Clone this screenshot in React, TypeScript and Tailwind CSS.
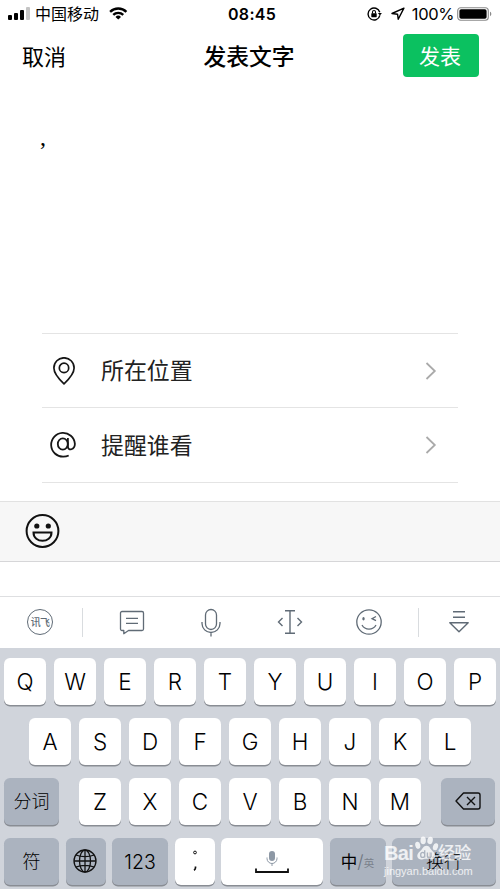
import type { ReactNode } from "react";

const rowOne = ["Q", "W", "E", "R", "T", "Y", "U", "I", "O", "P"];
const rowTwo = ["A", "S", "D", "F", "G", "H", "J", "K", "L"];
const rowThree = ["Z", "X", "C", "V", "B", "N", "M"];

function Key({ children, className = "w-[42px]", dark = false }: { children: ReactNode; className?: string; dark?: boolean }) {
  return (
    <button
      className={`flex h-[47px] shrink-0 items-center justify-center rounded-[6px] text-black shadow-[0_1.5px_0_#898d94] ${
        dark ? "bg-[#abb3bf]" : "bg-white"
      } ${className}`}
    >
      {children}
    </button>
  );
}

function Letter({ children }: { children: string }) {
  return (
    <Key>
      <span className="pt-[3px] text-[22.5px] leading-none font-light">{children}</span>
    </Key>
  );
}

function StatusBar() {
  return (
    <div className="relative flex h-7 items-center justify-between pr-[7px] pl-2">
      <div className="flex items-center">
        <svg className="mr-[5px] h-[13px] w-[22px]" viewBox="0 0 22 13">
          <rect x="0" y="8" width="4" height="5" rx="1" />
          <rect x="6" y="6" width="4" height="7" rx="1" />
          <rect x="12" y="3" width="4" height="10" rx="1" />
          <rect x="18" y="0" width="4" height="13" rx="1" fill="#c4c4c4" />
        </svg>
        <span className="text-[16px] leading-none">中国移动</span>
        <svg className="ml-[10px] h-[13px] w-[18.5px]" viewBox="0 0 20 14" fill="none" stroke="#000" strokeWidth="2.6">
          <path d="M1.2 5.2a12.6 12.6 0 0 1 17.6 0" />
          <path d="M4.6 8.5a7.8 7.8 0 0 1 10.8 0" />
          <path d="M10 13.6 7 10.7a4.3 4.3 0 0 1 6 0z" fill="#000" stroke="none" />
        </svg>
      </div>
      <span className="absolute top-[6px] left-[228px] text-[16px] leading-none font-semibold tracking-[0.3px]">08:45</span>
      <div className="flex items-center">
        <svg className="mr-[9px] h-[14px] w-[15px]" viewBox="0 0 15 14" fill="none" stroke="#000" strokeWidth="1.4">
          <path d="M12.8 5.2a6 6 0 1 0 .1 3.2" />
          <path d="M10.9 6h4l-2 2.6z" fill="#000" stroke="none" />
          <rect x="4.3" y="6.2" width="5.4" height="4" rx=".6" fill="#000" stroke="none" />
          <path d="M5.5 6.5V5a1.5 1.5 0 0 1 3 0v1.5" strokeWidth="1.1" />
        </svg>
        <svg className="mr-[7px] h-[13px] w-[14px]" viewBox="0 0 13 12" fill="none" stroke="#000" strokeWidth="1.3" strokeLinejoin="round">
          <path d="M12 1 .9 6l5.2.7.6 4.6z" />
        </svg>
        <span className="text-[16.5px] leading-none tracking-[-0.4px]">100%</span>
        <svg className="ml-[3px] h-[14px] w-[36px]" viewBox="0 0 36 14">
          <rect x=".7" y=".7" width="30.6" height="12.6" rx="3" fill="none" stroke="#8a8a8a" strokeWidth="1.1" />
          <rect x="2.4" y="2.2" width="27.2" height="9.6" rx="1.8" />
          <path d="M33 4.8v4.4c1.8-.6 1.8-3.8 0-4.4z" fill="#8a8a8a" />
        </svg>
      </div>
    </div>
  );
}

function Chevron() {
  return (
    <svg className="mt-px mr-[21px] ml-auto h-[18px] w-[12px]" viewBox="0 0 12 18" fill="none" stroke="#aaa" strokeWidth="1.8">
      <path d="M1.5 1 9.8 9l-8.3 8" />
    </svg>
  );
}

function Options() {
  return (
    <div className="mr-[42px] ml-[42px] border-b border-[#e4e4e4] text-[22.9px]">
      <div className="flex h-[74px] items-center border-t border-[#e4e4e4]">
        <svg className="mt-px mr-[25px] ml-[9px] h-7 w-[25px]" viewBox="0 0 25 28" fill="none" stroke="#161616" strokeWidth="1.7">
          <path d="M13 26.8C9 23 2.9 17 2.9 10.9a10.1 10.1 0 0 1 20.2 0C23.1 17 17 23 13 26.8z" strokeLinejoin="round" />
          <circle cx="13" cy="10.9" r="4.7" />
        </svg>
        <span className="pt-[2px] leading-none text-[#222]">所在位置</span>
        <Chevron />
      </div>
      <div className="flex h-[75px] items-center border-t border-[#e4e4e4]">
        <svg className="mr-[25px] ml-[8px] h-[27px] w-[26px]" viewBox="0 0 26 27" fill="none" stroke="#161616" strokeWidth="1.8">
          <ellipse cx="12.8" cy="13" rx="5" ry="5.7" />
          <path d="M17.9 7v8.500c0 4.900 7 3.300 7-2.700a11.900 11.900 0 1 0-11.600 12.900c2 0 3.800-.4 5.400-1.200" />
        </svg>
        <span className="pt-[3px] leading-none text-[#222]">提醒谁看</span>
        <Chevron />
      </div>
    </div>
  );
}

function EmojiBar() {
  return (
    <div className="mt-[18px] flex h-[61px] items-center border-y border-t-[#e2e2e2] border-b-[#d6d6d8] bg-[#f7f7f7] pl-[25px]">
      <svg className="h-[35px] w-[35px]" viewBox="0 0 35 35" fill="none" stroke="#111" strokeWidth="2">
        <circle cx="17.5" cy="17" r="15.9" />
        <circle cx="11.8" cy="12" r="2.6" fill="#111" stroke="none" />
        <circle cx="23.3" cy="12" r="2.6" fill="#111" stroke="none" />
        <path d="M8.5 18.500h18c0 11-18 11-18 0z" />
      </svg>
    </div>
  );
}

function InputTools() {
  return (
    <div className="mt-[34px] flex h-[52px] items-center border-t border-[#dedfe1] text-[#606b76]">
      <div className="ml-[27px] flex h-[26px] w-[26px] items-center justify-center rounded-full border-[1.3px] border-[#606b76]">
        <span className="text-[10px] leading-none font-medium tracking-[-0.8px] whitespace-nowrap">讯飞</span>
      </div>
      <div className="ml-[29px] h-[29px] w-px bg-[#d9dcdf]" />
      <svg className="ml-[36px] h-[26px] w-[26px]" viewBox="0 0 26 26" fill="none" stroke="currentColor" strokeWidth="1.3" strokeLinejoin="round">
        <path d="M3 2.5h20a1.5 1.5 0 0 1 1.5 1.5v16a1.5 1.5 0 0 1-1.5 1.5H9.5L4.800 24.700v-3.200H3A1.500 1.500 0 0 1 1.500 20V4A1.500 1.500 0 0 1 3 2.500z" />
        <path d="M7 9.300h12M7 14.300h12" />
      </svg>
      <svg className="ml-[56px] h-[29px] w-[20px]" viewBox="0 0 20 29" fill="none" stroke="currentColor" strokeWidth="1.3">
        <rect x="4.5" y="1.5" width="11" height="20" rx="5.5" />
        <path d="M1 14v1.500a9 9 0 0 0 18 0V14M10 24.500V28.500" />
      </svg>
      <svg className="ml-[56px] h-[26px] w-[26px]" viewBox="0 0 26 26" fill="none" stroke="currentColor" strokeWidth="1.4">
        <path d="M8 1.700h10M8 24.300h10M13 1.700v22.600M5.500 9 1.500 13l4 4M20.500 9l4 4-4 4" />
      </svg>
      <svg className="ml-[53px] h-[26px] w-[26px]" viewBox="0 0 26 26" fill="none" stroke="currentColor" strokeWidth="1.3">
        <circle cx="13" cy="13" r="12.2" />
        <ellipse cx="7.5" cy="9.8" rx="1.2" ry="1.8" fill="currentColor" stroke="none" />
        <path d="m20 7.500-4 2.200 4 2M6 16c3 5.500 11 5.500 14 0" />
      </svg>
      <div className="ml-[36px] h-[29px] w-px bg-[#d9dcdf]" />
      <svg className="ml-[30px] h-[24px] w-[20px]" viewBox="0 0 20 24" fill="none" stroke="currentColor" strokeWidth="1.4">
        <path d="M4 1.700h12M4 7.200h12M.8 12.700h18.400L10 21.800z" strokeLinejoin="round" />
      </svg>
    </div>
  );
}

function Watermark() {
  return (
    <div className="absolute top-[188px] left-[384px] h-[50px] w-[92px] font-['Liberation_Sans','Noto_Sans_CJK_SC',sans-serif] text-white/80">
      <div className="flex h-[27px] items-end leading-none">
        <span className="text-[20px] leading-none font-bold tracking-[-0.7px]">Bai</span>
        <svg className="mb-[1px] h-[27px] w-[27px] shrink-0" viewBox="0 0 28 30" fill="currentColor">
          <ellipse cx="4.3" cy="11.5" rx="2.8" ry="4" transform="rotate(-12 4.3 11.5)" />
          <ellipse cx="10.3" cy="6" rx="3" ry="4.2" />
          <ellipse cx="18" cy="6" rx="3" ry="4.2" transform="rotate(12 18 6)" />
          <ellipse cx="24" cy="13" rx="2.8" ry="4" transform="rotate(18 24 13)" />
          <path d="M14 12c3.500 0 4 3.500 6.500 5.700 6 5.300 2.300 10.300-2.500 9.300-3-.7-5-.7-8 0-5.800 1.300-9-4.500-3-9.200C10 15.400 10.500 12 14 12z" />
          <path d="M12 17v8M12 21.500a2.200 2.200 0 1 0-4.400 0v1.200a2.200 2.200 0 0 0 4.400 0zM15 19.500v4a2 2 0 0 0 4 0v-4" fill="none" stroke="#abb3bf" strokeWidth="1.5" />
        </svg>
        <span className="mb-[1px] -ml-[2px] text-[17px] leading-none font-medium tracking-[-0.7px] whitespace-nowrap">经验</span>
      </div>
      <div className="mt-[3px] text-[11px] leading-none whitespace-nowrap">jingyan.baidu.com</div>
    </div>
  );
}

function Keyboard() {
  return (
    <div className="relative flex h-[242px] flex-col gap-[13px] bg-[#d0d4db] pt-[10px]">
      <div className="flex gap-2 pl-1">
        {rowOne.map((letter) => (
          <Letter key={letter}>{letter}</Letter>
        ))}
      </div>
      <div className="flex justify-center gap-2">
        {rowTwo.map((letter) => (
          <Letter key={letter}>{letter}</Letter>
        ))}
      </div>
      <div className="flex justify-between pr-[5px] pl-1">
        <Key dark className="w-[55px]">
          <span className="text-[18px] font-light">分词</span>
        </Key>
        <div className="flex gap-2">
          {rowThree.map((letter) => (
            <Letter key={letter}>{letter}</Letter>
          ))}
        </div>
        <Key dark className="w-[54px]">
          <svg className="h-[18px] w-[26px]" viewBox="0 0 26 18" fill="none" stroke="#111" strokeWidth="1.4" strokeLinejoin="round">
            <path d="M8.500 1H23a2 2 0 0 1 2 2v12a2 2 0 0 1-2 2H8.500L1 9z" />
            <path d="m12 5 8 8M20 5l-8 8" />
          </svg>
        </Key>
      </div>
      <div className="flex justify-between pr-1 pl-1">
        <Key dark className="w-[55px]">
          <span className="pt-px text-[18px] font-light">符</span>
        </Key>
        <Key dark className="w-[40px]">
          <svg className="mr-[2px] h-6 w-6" viewBox="0 0 24 24" fill="none" stroke="#111" strokeWidth="1.3">
            <circle cx="12" cy="12" r="11" />
            <ellipse cx="12" cy="12" rx="5.5" ry="11" />
            <path d="M12 1v22M1 12h22M3 6c5 2.200 13 2.200 18 0M3 18c5-2.200 13-2.200 18 0" />
          </svg>
        </Key>
        <Key dark className="w-[56px]">
          <span className="pt-[3px] text-[19.5px] font-light">123</span>
        </Key>
        <Key className="w-[40px]">
          <svg className="h-[22px] w-[6px]" viewBox="0 0 6 22" fill="none" stroke="#111">
            <circle cx="3" cy="2.5" r="1.4" />
            <path d="M3.500 16.500v1.200c0 1-.7 2-1.500 2.500" strokeWidth="1.7" />
          </svg>
        </Key>
        <Key className="w-[102px]">
          <svg className="mt-[2px] h-[24px] w-[34px]" viewBox="0 0 34 24" fill="none" stroke="#8d98a5">
            <rect x="14" y="1" width="6" height="10" rx="3" fill="#8d98a5" stroke="none" />
            <path d="M12 7.500v1a5 5 0 0 0 10 0v-1M17 13.500V16" />
            <path d="M1 18.500V22h32v-3.500" stroke="#111" strokeWidth="1.8" />
          </svg>
        </Key>
        <Key dark className="w-[56px]">
          <span className="pt-[2px] text-[16.5px]">中</span>
          <span className="text-[18px] font-light text-[#6f7680]">/</span>
          <span className="pt-[6px] text-[10.5px] text-[#7a818b]">英</span>
        </Key>
        <Key dark className="w-[104px]">
          <span className="text-[18px] font-light">换行</span>
        </Key>
      </div>
      <Watermark />
    </div>
  );
}

export default function App() {
  return (
    <div className="flex h-[889px] w-[500px] flex-col overflow-hidden bg-white font-[Inter,'Noto_Sans_CJK_SC',sans-serif] text-black">
      <StatusBar />
      <header className="flex h-14 items-center justify-between pr-[21px] pl-[22px]">
        <button className="w-[76px] pt-[2px] text-left text-[22px] leading-none">取消</button>
        <h1 className="pt-[3px] pr-[3px] text-[22.8px] leading-none font-medium">发表文字</h1>
        <button className="h-[43px] w-[76px] rounded-[4px] bg-[#0bc160] pt-[1px] pr-[2px] text-[21px] leading-none text-white">发表</button>
      </header>
      <div className="h-[249px] shrink-0 px-[40px] pt-[38px] font-['Liberation_Serif',serif] text-[24px] leading-[30px]">,</div>
      <Options />
      <EmojiBar />
      <InputTools />
      <Keyboard />
    </div>
  );
}
